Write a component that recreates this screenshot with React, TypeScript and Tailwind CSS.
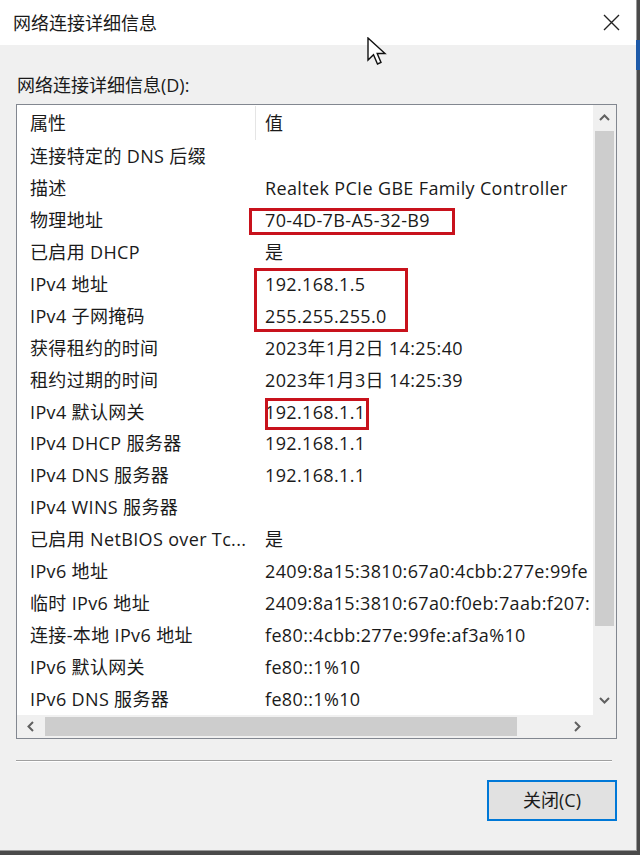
import React from "react";

const rows: [string, string][] = [
  ["连接特定的 DNS 后缀", ""],
  ["描述", "Realtek PCIe GBE Family Controller"],
  ["物理地址", "70-4D-7B-A5-32-B9"],
  ["已启用 DHCP", "是"],
  ["IPv4 地址", "192.168.1.5"],
  ["IPv4 子网掩码", "255.255.255.0"],
  ["获得租约的时间", "2023年1月2日 14:25:40"],
  ["租约过期的时间", "2023年1月3日 14:25:39"],
  ["IPv4 默认网关", "192.168.1.1"],
  ["IPv4 DHCP 服务器", "192.168.1.1"],
  ["IPv4 DNS 服务器", "192.168.1.1"],
  ["IPv4 WINS 服务器", ""],
  ["已启用 NetBIOS over Tc...", "是"],
  ["IPv6 地址", "2409:8a15:3810:67a0:4cbb:277e:99fe"],
  ["临时 IPv6 地址", "2409:8a15:3810:67a0:f0eb:7aab:f207:"],
  ["连接-本地 IPv6 地址", "fe80::4cbb:277e:99fe:af3a%10"],
  ["IPv6 默认网关", "fe80::1%10"],
  ["IPv6 DNS 服务器", "fe80::1%10"],
];

function Chevron({ dir }: { dir: "up" | "down" | "left" | "right" }) {
  const d =
    dir === "up"
      ? "M1 7 L5.5 2.5 L10 7"
      : dir === "down"
      ? "M1 3 L5.5 7.5 L10 3"
      : dir === "left"
      ? "M7 1 L2.5 5.5 L7 10"
      : "M3 1 L7.5 5.5 L3 10";
  return (
    <svg width="11" height="11" viewBox="0 0 11 11">
      <path d={d} fill="none" stroke="#606060" strokeWidth="2" />
    </svg>
  );
}

export default function App() {
  return (
    <div
      className="relative w-[640px] h-[855px] bg-[#4a4a4a] overflow-hidden text-[#1a1a1a]"
      style={{ fontFamily: "'Open Sans', 'Noto Sans CJK SC', sans-serif" }}
    >
      <div className="absolute right-0 top-[40px] w-[4px] h-[30px] bg-[#1e5aa8]" />
      {/* window */}
      <div className="flex flex-col w-[637px] h-[851px] bg-[#f0f0f0] border-r border-b border-[#9a9a9a]">
        {/* title bar */}
        <div className="flex items-center justify-between h-[45px] bg-white pl-[13px] pr-[16px]">
          <span className="text-[18px] leading-none">网络连接详细信息</span>
          <svg width="17" height="17" viewBox="0 0 17 17">
            <path d="M1 1 L16 16 M16 1 L1 16" stroke="#222" strokeWidth="1.4" />
          </svg>
        </div>
        {/* body */}
        <div className="flex flex-col pl-[16px] pr-[19px] pt-[28px]">
          <div className="h-[24px] leading-[24px] text-[18px] pl-[1px] mb-[7px]">网络连接详细信息(D):</div>
          {/* list box */}
          <div className="relative flex flex-col h-[635px] border border-[#828790] bg-white">
            <div className="flex flex-1 min-h-0">
              <div className="flex-1 min-w-0 overflow-hidden">
                <div className="flex items-center h-[36px] text-[18px]">
                  <div className="w-[238px] pl-[13px] shrink-0">属性</div>
                  <div className="w-px h-[34px] bg-[#e5e5e5] shrink-0" />
                  <div className="pl-[9px]">值</div>
                </div>
                {rows.map(([k, v], i) => (
                  <div
                    key={i}
                    className="flex items-center h-[31.9px] text-[18px] tracking-[0.35px] whitespace-nowrap"
                  >
                    <div className="w-[248px] pl-[13px] shrink-0">{k}</div>
                    <div>{v}</div>
                  </div>
                ))}
              </div>
              {/* vertical scrollbar */}
              <div className="flex flex-col w-[23px] bg-[#f0f0f0]">
                <div className="h-[26px] flex items-center justify-center">
                  <Chevron dir="up" />
                </div>
                <div className="mx-[2px] h-[495px] bg-[#cdcdcd]" />
                <div className="flex-1 flex items-end justify-center pb-[9px]">
                  <Chevron dir="down" />
                </div>
              </div>
            </div>
            {/* horizontal scrollbar */}
            <div className="flex items-center h-[23px] bg-[#f0f0f0]">
              <div className="w-[28px] flex justify-center">
                <Chevron dir="left" />
              </div>
              <div className="w-[472px] h-[19px] bg-[#cdcdcd]" />
              <div className="flex-1 flex justify-end pr-[10px]">
                <Chevron dir="right" />
              </div>
              <div className="w-[23px] h-[23px] bg-[#f0f0f0]" />
            </div>
            {/* red highlight boxes */}
            <div className="absolute left-[232px] top-[103px] w-[206px] h-[27px] border-[3px] border-[#c8121c]" />
            <div className="absolute left-[237px] top-[163px] w-[154px] h-[64px] border-[3px] border-[#c8121c]" />
            <div className="absolute left-[248px] top-[293px] w-[104px] h-[32px] border-[3px] border-[#c8121c]" />
          </div>
          {/* separator */}
          <div className="mt-[21px] h-[2px] border-t border-[#a0a0a0] border-b border-b-white w-[596px]" />
          {/* button */}
          <div className="flex justify-end mt-[18px]">
            <div className="w-[130px] h-[41px] border-2 border-[#0078d7] bg-[#e1e1e1] flex items-center justify-center text-[18px]">
              关闭(C)
            </div>
          </div>
        </div>
      </div>
      {/* mouse cursor */}
      <svg className="absolute left-[367px] top-[37px]" width="20" height="29" viewBox="0 0 20 29">
        <path
          d="M1 1 L1 23 L6.5 17.8 L10.5 27 L14 25.5 L10.2 16.5 L18 16.5 Z"
          fill="white"
          stroke="#111"
          strokeWidth="1.4"
          strokeLinejoin="miter"
        />
      </svg>
    </div>
  );
}
